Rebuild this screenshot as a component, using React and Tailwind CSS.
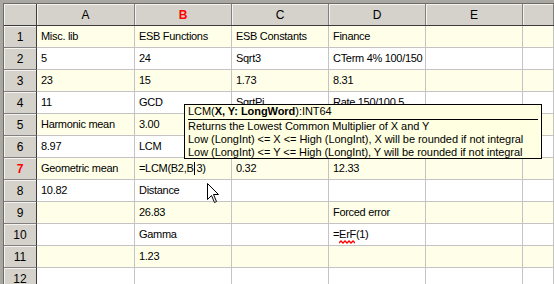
import React from "react";

const COLS = ["A", "B", "C", "D", "E", ""];

// C5..D6 sit under the hint window, so they are left blank
const ROWS = [
  ["Misc. lib", "ESB Functions", "ESB Constants", "Finance", "", ""],
  ["5", "24", "Sqrt3", "CTerm 4% 100/150", "", ""],
  ["23", "15", "1.73", "8.31", "", ""],
  ["11", "GCD", "SqrtPi", "Rate 150/100 5", "", ""],
  ["Harmonic mean", "3.00", "", "", "", ""],
  ["8.97", "LCM", "", "", "", ""],
  ["Geometric mean", "edit", "0.32", "12.33", "", ""],
  ["10.82", "Distance", "", "", "", ""],
  ["", "26.83", "", "Forced error", "", ""],
  ["", "Gamma", "", "erf", "", ""],
  ["", "1.23", "", "", "", ""],
  ["", "", "", "", "", ""],
];

const gridCols = "grid grid-cols-[33px_98px_97px_97px_97px_97px_1fr]";

const CellText = ({ value }) => {
  if (value === "edit") {
    return (
      <span className="flex items-center">
        =LCM(B2,B
        <span className="inline-block w-px h-[13px] bg-black mx-px" />
        3)
      </span>
    );
  }
  if (value === "erf") {
    return (
      <span className="relative">
        =ErF(1)
        <svg className="absolute left-[6px] top-[14px]" width="16" height="4" viewBox="0 0 16 4">
          <path d="M0 3 L2 1 L4 3 L6 1 L8 3 L10 1 L12 3 L14 1 L16 3" stroke="#ff0000" strokeWidth="1.3" fill="none" />
        </svg>
      </span>
    );
  }
  return value;
};

const Header = ({ children, red, className = "" }) => (
  <div
    className={`h-full flex items-center justify-center bg-[#d5d2cb] border-r border-[#808080] shadow-[inset_1px_1px_0_#f4f3ef] ${
      red ? "text-[#ff0000] font-bold" : "text-black"
    } ${className}`}
  >
    {children}
  </div>
);

const MouseArrow = () => (
  <svg className="absolute left-[207px] top-[183px]" width="13" height="21" viewBox="0 0 13 21">
    <path
      d="M0.5 0.5 L0.5 16.5 L4.5 12.5 L7.5 19.5 L9.5 18.5 L6.5 11.5 L11.5 11.5 Z"
      fill="#ffffff"
      stroke="#000000"
      strokeWidth="1"
    />
  </svg>
);

export default function App() {
  return (
    <div className="relative w-[554px] h-[284px] overflow-hidden bg-white text-[11px] font-['Liberation_Sans',Arial,sans-serif] text-black">
      <div className="h-full border-t-[3px] border-l-[3px] border-[#a9a7a1]">
        <div className="h-full border-t border-l border-[#6d6b66]">
          {/* column headers */}
          <div className={`${gridCols} h-[22px] border-b border-[#3c3c3c] text-[12px]`}>
            <Header className="border-r-[#3c3c3c]" />
            {COLS.map((c) => (
              <Header key={c || "f"} red={c === "B"}>
                {c}
              </Header>
            ))}
          </div>

          {ROWS.map((row, i) => {
            const n = i + 1;
            const tint = n % 2 === 1 ? "bg-[#ffffe9]" : "bg-white";
            return (
              <div key={n} className={`${gridCols} h-[22px]`}>
                <div
                  className={`flex items-center justify-center text-[12px] bg-[#d5d2cb] border-r border-r-[#3c3c3c] border-b border-b-[#808080] shadow-[inset_1px_1px_0_#f4f3ef] ${
                    n === 7 ? "text-[#ff0000] font-bold" : ""
                  }`}
                >
                  {n}
                </div>
                {row.map((v, j) => (
                  <div
                    key={j}
                    className={`flex items-center pl-[4px] tracking-[-0.3px] whitespace-nowrap overflow-hidden border-r border-b border-[#c4c4c4] ${tint}`}
                  >
                    <CellText value={v} />
                  </div>
                ))}
              </div>
            );
          })}
        </div>
      </div>

      {/* hint window */}
      <div className="absolute left-[184px] top-[104px] w-[358px] h-[55px] bg-[#ffffe1] border border-[#000000] px-[3px] leading-[13px] tracking-[-0.05px]">
        <div className="border-b border-black pb-px">
          LCM(<span className="font-bold">X, Y: LongWord</span>):INT64
        </div>
        <div>Returns the Lowest Common Multiplier of X and Y</div>
        <div>Low (LongInt) &lt;= X &lt;= High (LongInt), X will be rounded if not integral</div>
        <div>Low (LongInt) &lt;= Y &lt;= High (LongInt), Y will be rounded if not integral</div>
      </div>

      <MouseArrow />
    </div>
  );
}
